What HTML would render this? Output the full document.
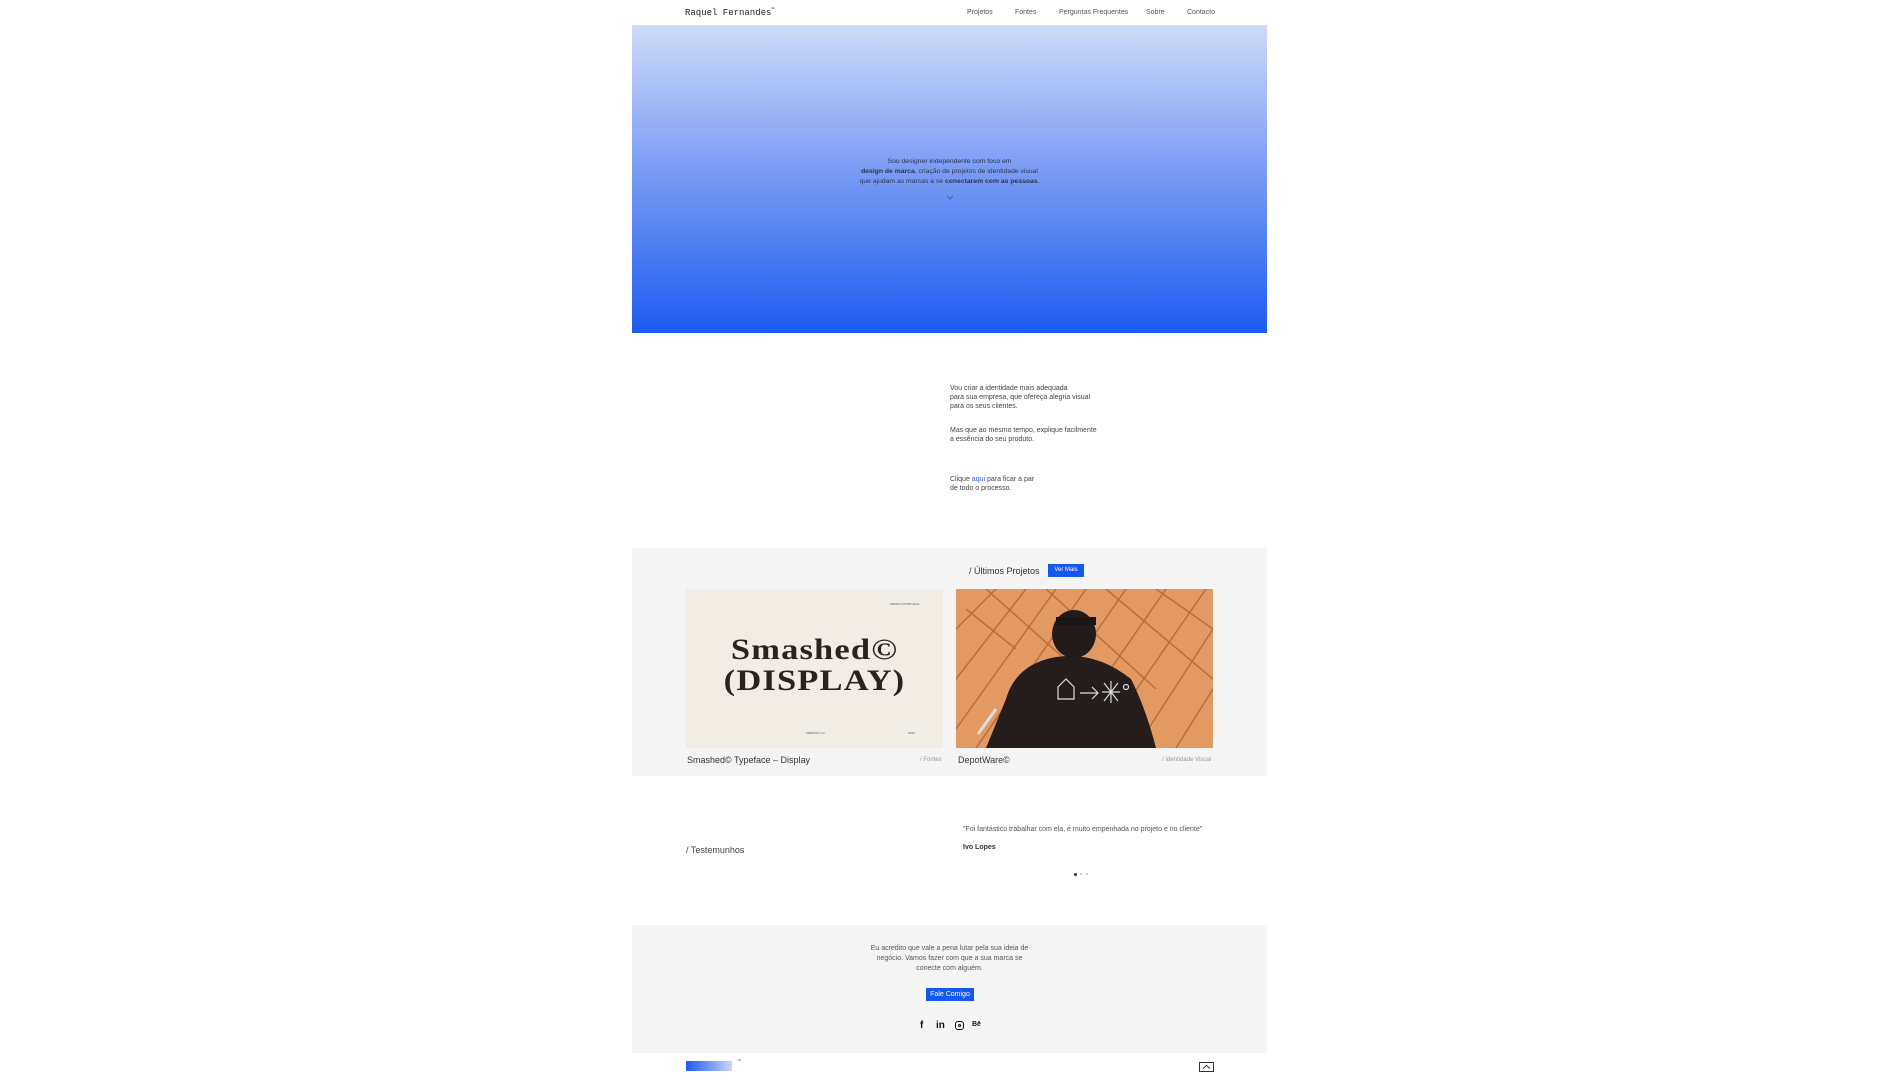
<!DOCTYPE html>
<html><head><meta charset="utf-8"><style>
*{margin:0;padding:0;box-sizing:border-box}
body{width:1900px;height:1080px;background:#fff;font-family:"Liberation Sans",sans-serif;color:#333;position:relative;overflow:hidden}
.a{position:absolute;white-space:nowrap}
.nav{font-size:7px;color:#555;top:9px}
.p{font-size:7px;line-height:9px;color:#444}
</style></head><body>
<div class="a" style="left:685px;top:7px;font-family:'Liberation Mono',monospace;font-size:9px;color:#222">Raquel Fernandes<sup style="font-size:5px">™</sup></div>
<div class="a nav" style="left:967px">Projetos</div>
<div class="a nav" style="left:1015px">Fontes</div>
<div class="a nav" style="left:1059px">Perguntas Frequentes</div>
<div class="a nav" style="left:1146px">Sobre</div>
<div class="a nav" style="left:1187px">Contacto</div>

<div class="a" style="left:632px;top:25px;width:635px;height:308px;background:linear-gradient(#cfdaf9,#7d9ff4 45%,#1d5bf0)"></div>
<div class="a p" style="left:632px;width:635px;top:157px;text-align:center;color:#2a3350;line-height:10px;font-size:6.8px">Sou designer independente com foco em<br><b>design de marca</b>, criação de projetos de identidade visual<br>que ajudam as marcas a se <b>conectarem com as pessoas</b>.</div>
<svg class="a" style="left:946px;top:195px" width="8" height="5"><path d="M1 1l3 3 3-3" fill="none" stroke="#4a5a90" stroke-width="1"/></svg>

<div class="a p" style="left:950px;top:384px">Vou criar a identidade mais adequada<br>para sua empresa, que ofereça alegria visual<br>para os seus clientes.</div>
<div class="a p" style="left:950px;top:426px">Mas que ao mesmo tempo, explique facilmente<br>a essência do seu produto.</div>
<div class="a p" style="left:950px;top:475px">Clique <span style="color:#2b62e8">aqui</span> para ficar a par<br>de todo o processo.</div>

<div class="a" style="left:632px;top:548px;width:635px;height:228px;background:#f5f5f5"></div>
<div class="a" style="left:969px;top:566px;font-size:9px;color:#333">/ Últimos Projetos</div>
<div class="a" style="left:1048px;top:564px;width:36px;height:13px;background:#1458f0;color:#fff;font-size:6px;text-align:center;line-height:13px">Ver Mais</div>
<div class="a" style="left:686px;top:589px;width:257px;height:159px;background:#f1ede4"></div>
<div class="a" style="left:686px;top:634px;width:257px;text-align:center;font-family:'Liberation Serif',serif;font-weight:bold;font-size:30px;line-height:31px;color:#2a2220;letter-spacing:1px;transform:scaleX(1.15)">Smashed©<br>(DISPLAY)</div>
<div class="a" style="left:890px;top:602px;font-size:3px;color:#555">MADE IN PORTUGAL</div>
<div class="a" style="left:806px;top:731px;font-size:3px;color:#555">VERSION 1.0</div>
<div class="a" style="left:908px;top:731px;font-size:3px;color:#555">2020</div>
<svg class="a" style="left:956px;top:589px" width="257" height="159" viewBox="0 0 257 159">
<rect width="257" height="159" fill="#e39a62"/>
<g stroke="#a85a2a" stroke-width="1.5" fill="none" opacity=".7">
<path d="M0 40L40 0M0 90L70 0M0 140L100 0M20 159L130 0M60 159L170 0M100 159L210 0M140 159L250 0M180 159L257 40M220 159L257 100"/>
<path d="M10 20L60 60M30 0L120 80M90 0L200 100M150 0L257 90M200 0L257 40"/>
</g>
<path d="M30 159L50 110Q60 75 100 68Q140 62 175 90Q190 120 200 159Z" fill="#241d1b"/>
<ellipse cx="118" cy="45" rx="22" ry="24" fill="#221b1a"/>
<rect x="100" y="28" width="40" height="8" fill="#1a1414"/>
<path d="M40 120L22 145" stroke="#ddd" stroke-width="3"/>
<g stroke="#ddd" stroke-width="1.2" fill="none"><path d="M102 110v-12l8-8 8 8v12z"/><path d="M124 104h18M136 98l6 6-6 6"/><path d="M148 94l14 18M162 94l-14 18M155 92v22M146 103h18"/><circle cx="170" cy="98" r="2.5"/></g>
</svg>
<div class="a" style="left:687px;top:755px;font-size:9px;color:#333">Smashed© Typeface – Display</div>
<div class="a" style="left:920px;top:757px;font-size:6px;color:#999">/ Fontes</div>
<div class="a" style="left:958px;top:755px;font-size:9px;color:#333">DepotWare©</div>
<div class="a" style="left:1162px;top:757px;font-size:6px;color:#999">/ Identidade Visual</div>

<div class="a" style="left:686px;top:845px;font-size:9px;color:#444">/ Testemunhos</div>
<div class="a" style="left:963px;top:826px;font-size:7px;color:#555">"Foi fantástico trabalhar com ela, é muito empenhada no projeto e no cliente"</div>
<div class="a" style="left:963px;top:844px;font-size:7px;color:#333;font-weight:bold">Ivo Lopes</div>
<div class="a" style="left:1074px;top:873px;width:3px;height:3px;border-radius:50%;background:#333"></div>
<div class="a" style="left:1080px;top:873px;width:2px;height:2px;border-radius:50%;background:#bbb"></div>
<div class="a" style="left:1086px;top:873px;width:2px;height:2px;border-radius:50%;background:#bbb"></div>

<div class="a" style="left:632px;top:925px;width:635px;height:128px;background:#f5f5f5"></div>
<div class="a p" style="left:632px;width:635px;top:944px;text-align:center;line-height:10px;color:#555">Eu acredito que vale a pena lutar pela sua ideia de<br>negócio. Vamos fazer com que a sua marca se<br>conecte com alguém.</div>
<div class="a" style="left:926px;top:988px;width:48px;height:13px;background:#1458f0;color:#fff;font-size:7px;text-align:center;line-height:13px">Fale Comigo</div>
<div class="a" style="left:920px;top:1020px;font-size:10px;font-weight:bold;color:#111">f</div>
<div class="a" style="left:936px;top:1020px;font-size:10px;font-weight:bold;color:#111">in</div>
<div class="a" style="left:955px;top:1021px;width:9px;height:9px;border:1.3px solid #111;border-radius:3px"><div style="margin:1.5px;width:3.5px;height:3.5px;border:1.2px solid #111;border-radius:50%"></div></div>
<div class="a" style="left:972px;top:1021px;font-size:7px;font-weight:bold;color:#111">Bē</div>

<div class="a" style="left:686px;top:1061px;width:46px;height:10px;background:linear-gradient(90deg,#1d5bf0,#c9d6fa)"></div>
<div class="a" style="left:737px;top:1058px;font-size:4px;color:#333">™</div>
<svg class="a" style="left:1199px;top:1062px" width="15" height="10"><rect x=".5" y=".5" width="14" height="9" fill="none" stroke="#333"/><path d="M4 6.5l3.5-3 3.5 3" fill="none" stroke="#333"/></svg>
</body></html>
